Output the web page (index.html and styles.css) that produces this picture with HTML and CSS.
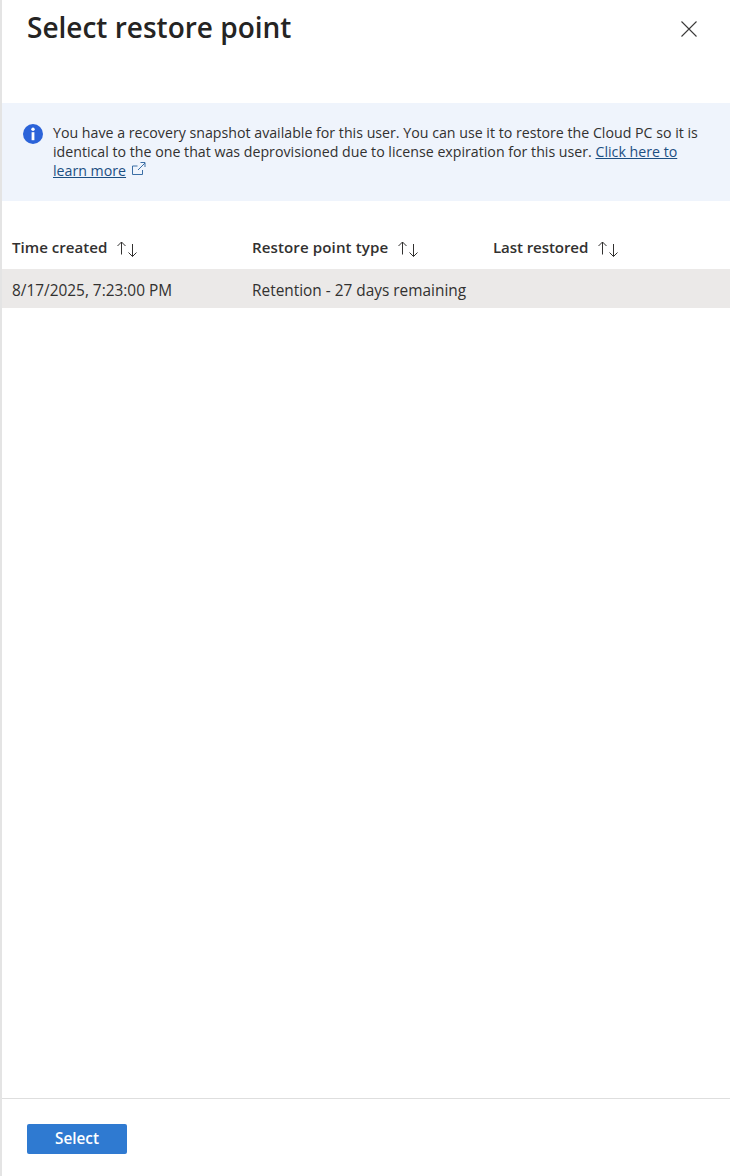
FILE: index.html
```html
<!DOCTYPE html>
<html lang="en">
<head>
  <meta charset="UTF-8" />
  <title>Select restore point</title>
  <link rel="stylesheet" href="styles.css">
</head>
<body>
  <div class="panel">
    <div class="panel-header">
      <h1>Select restore point</h1>
      <button class="close-btn" aria-label="Close">
        <svg width="16" height="16" viewBox="0 0 16 16"><path d="M.5.5l15 15M15.500.5l-15 15" stroke="#3b3a39" stroke-width="1.100" fill="none"/></svg>
      </button>
    </div>

    <div class="banner">
      <svg class="banner-icon" width="20" height="20" viewBox="0 0 20 20">
        <circle cx="10" cy="10" r="10" fill="#2b63d9"/>
        <circle cx="10" cy="5.300" r="1.700" fill="#fff"/>
        <rect x="8.600" y="8.200" width="2.800" height="8" fill="#fff"/>
      </svg>
      <p>You have a recovery snapshot available for this user. You can use it to restore the Cloud PC so it is identical to the one that was deprovisioned due to license expiration for this user. <a href="#">Click here to learn more</a>
        <svg class="ext-icon" width="14" height="14" viewBox="0 0 14 14"><path d="M10.500 8v4.500h-10v-8.500h5M6 8l7-7M8.500.500h4.500v4.500" stroke="#3b6ea5" fill="none"/></svg>
      </p>
    </div>

    <div class="table">
      <div class="row head">
        <div class="cell">Time created <span class="sort"><svg width="22" height="16" viewBox="0 0 22 16"><path d="M5.500 13.500V1M1.500 5L5.500 1 9.500 5M16.500 3V15.500M12.500 11.500L16.500 15.500l4-4" stroke="#323130" fill="none"/></svg></span></div>
        <div class="cell">Restore point type <span class="sort"><svg width="22" height="16" viewBox="0 0 22 16"><path d="M5.500 13.500V1M1.500 5L5.500 1 9.500 5M16.500 3V15.500M12.500 11.500L16.500 15.500l4-4" stroke="#323130" fill="none"/></svg></span></div>
        <div class="cell">Last restored <span class="sort"><svg width="22" height="16" viewBox="0 0 22 16"><path d="M5.500 13.500V1M1.500 5L5.500 1 9.500 5M16.500 3V15.500M12.500 11.500L16.500 15.500l4-4" stroke="#323130" fill="none"/></svg></span></div>
      </div>
      <div class="row selected">
        <div class="cell">8/17/2025, 7:23:00 PM</div>
        <div class="cell">Retention - 27 days remaining</div>
        <div class="cell"></div>
      </div>
    </div>

    <div class="panel-footer">
      <button class="select-btn">Select</button>
    </div>
  </div>
</body>
</html>
```

FILE: styles.css
```css
body {
  margin: 0;
  font-family: "Open Sans", "Noto Sans", sans-serif;
  color: #323130;
  background: white;
}
.panel {
  display: flex;
  flex-direction: column;
  height: 1176px;
  border-left: 2px solid #e4e4e4;
  box-sizing: border-box;
  overflow: hidden;
}
.panel-header {
  display: flex;
  justify-content: space-between;
  height: 103px;
  padding: 0 33px 0 25px;
}
h1 {
  margin: 8px 0 0;
  font-size: 28px;
  line-height: 38px;
  font-weight: 600;
  color: #252423;
}
.close-btn {
  width: 16px;
  height: 16px;
  margin-top: 21px;
  padding: 0;
  border: none;
  background: none;
}
.close-btn svg {
  display: block;
}
.banner {
  display: flex;
  gap: 10px;
  height: 98px;
  box-sizing: border-box;
  padding: 20px 30px 0 21px;
  background: #eff4fc;
}
.banner-icon {
  flex: none;
  margin-top: 1px;
}
.banner p {
  margin: 0;
  font-size: 14.200px;
  line-height: 19px;
}
.banner a {
  color: #1c4f82;
}
.ext-icon {
  margin-left: 2px;
}
.table {
  margin-top: 26px;
}
.row {
  display: grid;
  grid-template-columns: 240px 241px 1fr;
  padding-left: 10px;
  font-size: 15.400px;
  align-items: center;
}
.head {
  height: 42px;
  font-size: 15.100px;
  font-weight: 600;
}
.head .cell:nth-child(2) {
  letter-spacing: .1px;
}
.head .cell:nth-child(3) {
  letter-spacing: -.1px;
}
.selected {
  height: 39px;
  background: #ebe9e8;
}
.selected .cell {
  padding-top: 3px;
}
.sort {
  margin-left: 5px;
  vertical-align: middle;
}
.sort svg {
  vertical-align: -2px;
}
.panel-footer {
  margin-top: auto;
  height: 78px;
  box-sizing: border-box;
  border-top: 1px solid #dedede;
  padding: 25px 25px 0;
}
.select-btn {
  display: block;
  width: 100px;
  height: 30px;
  padding: 0 0 3px;
  border: none;
  border-radius: 2px;
  background: #2f7ad1;
  color: white;
  font-family: inherit;
  font-size: 15.300px;
  font-weight: 600;
}
```
